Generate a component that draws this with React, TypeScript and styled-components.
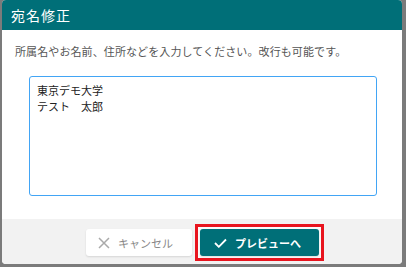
import React from "react";
import styled, { createGlobalStyle } from "styled-components";

const Global = createGlobalStyle`
  html, body { margin: 0; padding: 0; background: #7b7b7b; }
  body { font-family: "Noto Sans CJK JP", "Noto Sans", sans-serif; }
  * { box-sizing: border-box; }
`;

const Screen = styled.div`
  width: 406px;
  height: 267px;
  padding-left: 2px;
  overflow: hidden;
`;

const Dialog = styled.div`
  width: 400px;
  height: 264px;
  background: #fff;
  border-radius: 4px;
  overflow: hidden;
  display: flex;
  flex-direction: column;
`;

const Header = styled.div`
  height: 30px;
  background: #006f78;
  color: #fff;
  font-size: 14px;
  letter-spacing: 1px;
  display: flex;
  align-items: center;
  padding-left: 9px;
`;

const Body = styled.div`
  flex: 1;
  padding: 13px 24px 0 13px;
  display: flex;
  flex-direction: column;
`;

const Description = styled.p`
  margin: 0;
  font-size: 11px;
  color: #555;
  line-height: 16px;
  letter-spacing: 0.1px;
`;

const TextArea = styled.textarea`
  margin: 17px 0 0 14px;
  width: 348px;
  height: 120px;
  border: 1px solid #42a5f5;
  border-radius: 3px;
  padding: 5px 7px;
  font-family: "Noto Sans CJK JP", sans-serif;
  font-size: 11px;
  line-height: 16px;
  color: #222;
  resize: none;
  outline: none;
`;

const Footer = styled.div`
  height: 45px;
  background: #f2f2f2;
  display: flex;
  justify-content: center;
  align-items: center;
  padding: 5px 0 3px 6px;
  gap: 3px;
`;

const Highlight = styled.div`
  border: 3px solid #e8141e;
  padding: 2px;
  background: #fafafa;
  display: flex;
`;

const Button = styled.button<{ $primary?: boolean }>`
  height: 27px;
  border: none;
  border-radius: 3px;
  display: flex;
  align-items: center;
  gap: 8px;
  font-family: "Noto Sans CJK JP", sans-serif;
  font-size: 11px;
  font-weight: ${(p) => (p.$primary ? 700 : 400)};
  background: ${(p) => (p.$primary ? "#006f78" : "#fff")};
  color: ${(p) => (p.$primary ? "#fff" : "#888")};
  box-shadow: 0 1px 2px rgba(0, 0, 0, 0.12);
  padding: ${(p) => (p.$primary ? "0 0 0 14px" : "0 0 0 12px")};
  width: ${(p) => (p.$primary ? "119px" : "106px")};
  outline: none;
  cursor: pointer;
`;

export default function App() {
  return (
    <>
      <Global />
      <Screen>
        <Dialog>
          <Header>宛名修正</Header>
          <Body>
            <Description>所属名やお名前、住所などを入力してください。改行も可能です。</Description>
            <TextArea defaultValue={"東京デモ大学\nテスト　太郎"} />
          </Body>
          <Footer>
            <Button>
              <svg width="12" height="12" viewBox="0 0 12 12">
                <path d="M1 1L11 11M11 1L1 11" stroke="#aaa" strokeWidth="1.5" fill="none" />
              </svg>
              キャンセル
            </Button>
            <Highlight>
              <Button $primary>
                <svg width="13" height="10" viewBox="0 0 13 10">
                  <path d="M1 5L4.8 8.8L12 1.5" stroke="#fff" strokeWidth="1.8" fill="none" />
                </svg>
                プレビューへ
              </Button>
            </Highlight>
          </Footer>
        </Dialog>
      </Screen>
    </>
  );
}
